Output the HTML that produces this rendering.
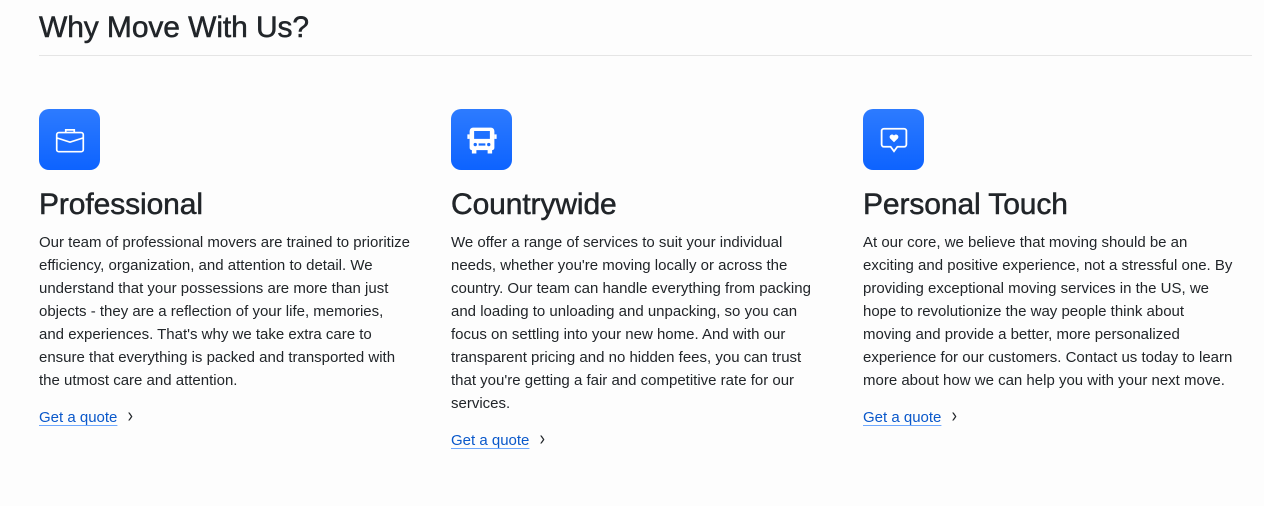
<!DOCTYPE html>
<html><head><meta charset="utf-8"><style>
body{margin:0;background:#fdfdfd;font-family:"Liberation Sans",Arial,sans-serif;color:#212529;width:1264px;height:506px;overflow:hidden;position:relative}
h2{position:absolute;left:39px;top:11px;margin:0;font-size:30px;font-weight:500;letter-spacing:-0.1px;-webkit-text-stroke:0.5px #212529}
.hr{position:absolute;left:39px;top:55px;width:1213px;height:1px;background:#e5e5e5}
.col{position:absolute;top:109px;width:400px}
.ic{width:61px;height:61px;border-radius:10px;background:linear-gradient(#2d7bff,#0d63ff);display:flex;align-items:center;justify-content:center}
h3{margin:0;position:absolute;top:79px;font-size:30px;font-weight:500;white-space:nowrap;letter-spacing:-0.1px;-webkit-text-stroke:0.5px #212529}
p{margin:0;position:absolute;top:122px;font-size:15px;line-height:23px;white-space:nowrap}
a{position:absolute;font-size:15px;color:#0a58ca;text-decoration:underline;text-decoration-color:#6ea8fe;text-underline-offset:3px;white-space:nowrap}
a span{color:#212529;display:inline-block;margin-left:10px;font-size:20px;line-height:15px;transform:scaleX(0.8)}
</style></head><body>
<h2>Why Move With Us?</h2><div class="hr"></div>

<div class="col" style="left:39px">
<div class="ic"><svg width="34" height="34" viewBox="0 0 32 32" fill="none" stroke="#fff" stroke-width="1.6"><rect x="3.5" y="9" width="25" height="18" rx="2"/><path d="M12 9V6.5h8V9M3.5 14l12.5 4 12.5-4"/></svg></div>
<h3>Professional</h3>
<p>Our team of professional movers are trained to prioritize<br>efficiency, organization, and attention to detail. We<br>understand that your possessions are more than just<br>objects - they are a reflection of your life, memories,<br>and experiences. That's why we take extra care to<br>ensure that everything is packed and transported with<br>the utmost care and attention.</p>
<a style="top:300px">Get a quote<span>&#x203A;</span></a>
</div>

<div class="col" style="left:451px">
<div class="ic"><svg width="36" height="36" viewBox="0 0 32 32" fill="#fff"><path d="M8 5h16a3 3 0 0 1 3 3v15a2 2 0 0 1-2 2v3h-4v-3H11v3H7v-3a2 2 0 0 1-2-2V8a3 3 0 0 1 3-3zM9 8v7h14V8z" fill-rule="evenodd"/><rect x="3" y="11" width="2" height="4"/><rect x="27" y="11" width="2" height="4"/><circle cx="10" cy="20" r="1.5" fill="#1a6eff"/><circle cx="22" cy="20" r="1.5" fill="#1a6eff"/><rect x="13" y="19" width="6" height="2" fill="#1a6eff"/></svg></div>
<h3>Countrywide</h3>
<p>We offer a range of services to suit your individual<br>needs, whether you're moving locally or across the<br>country. Our team can handle everything from packing<br>and loading to unloading and unpacking, so you can<br>focus on settling into your new home. And with our<br>transparent pricing and no hidden fees, you can trust<br>that you're getting a fair and competitive rate for our<br>services.</p>
<a style="top:323px">Get a quote<span>&#x203A;</span></a>
</div>

<div class="col" style="left:863px">
<div class="ic"><svg width="36" height="36" viewBox="0 0 32 32" fill="none" stroke="#fff" stroke-width="1.6"><path d="M7 6h18a2 2 0 0 1 2 2v12a2 2 0 0 1-2 2h-6l-3 4-3-4H7a2 2 0 0 1-2-2V8a2 2 0 0 1 2-2z"/><path d="M16 18l-3.5-3.5a2 2 0 0 1 3.5-2.5a2 2 0 0 1 3.5 2.5z" fill="#fff" stroke="none"/></svg></div>
<h3>Personal Touch</h3>
<p>At our core, we believe that moving should be an<br>exciting and positive experience, not a stressful one. By<br>providing exceptional moving services in the US, we<br>hope to revolutionize the way people think about<br>moving and provide a better, more personalized<br>experience for our customers. Contact us today to learn<br>more about how we can help you with your next move.</p>
<a style="top:300px">Get a quote<span>&#x203A;</span></a>
</div>
</body></html>
